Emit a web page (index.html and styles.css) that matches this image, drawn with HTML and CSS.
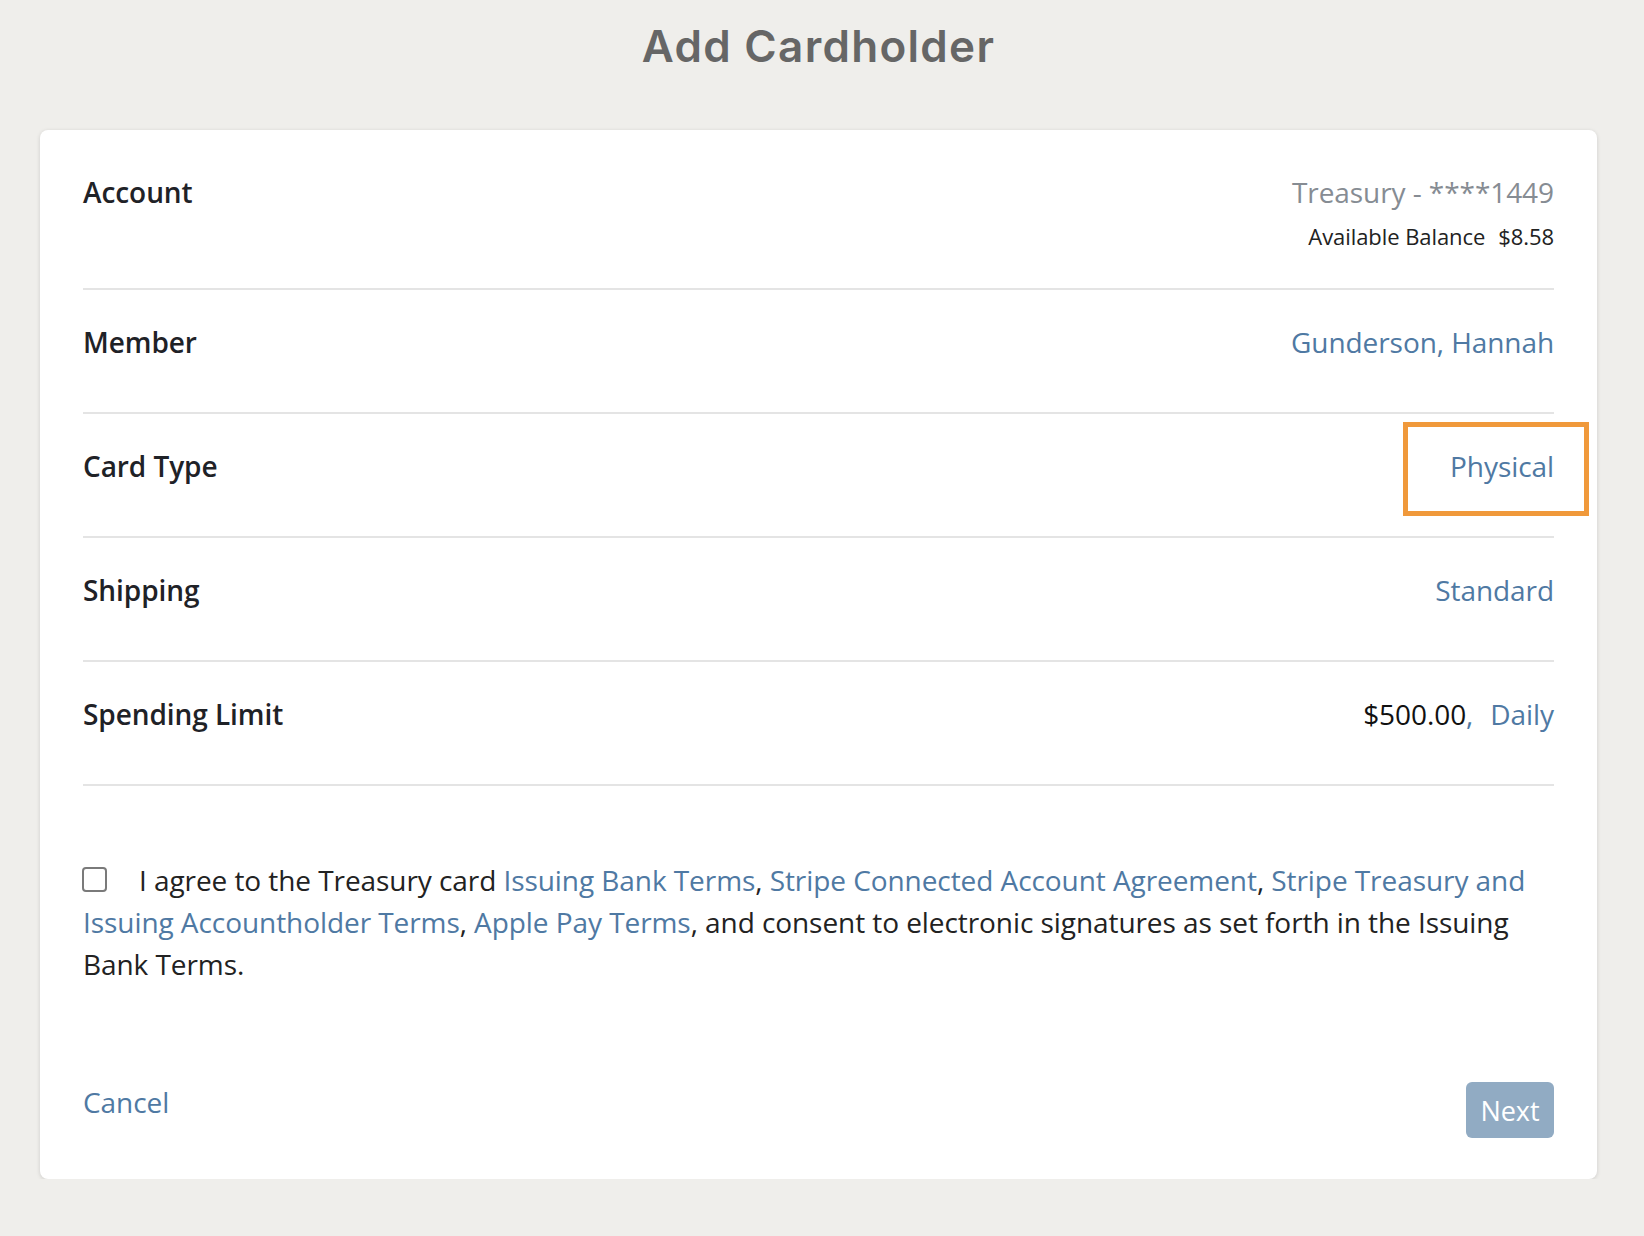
FILE: index.html
```html
<!DOCTYPE html>
<html lang="en">
<head>
<meta charset="utf-8">
<title>Add Cardholder</title>
<link rel="stylesheet" href="styles.css">
</head>
<body>
<div class="page">
  <h1 class="title">Add Cardholder</h1>
  <div class="card">
    <div class="row row-account">
      <div class="label">Account</div>
      <div class="value-stack">
        <div class="account-name">Treasury - ****1449</div>
        <div class="balance"><span>Available Balance</span><span class="balance-amt">$8.58</span></div>
      </div>
    </div>
    <div class="row">
      <div class="label">Member</div>
      <a class="link" href="#">Gunderson, Hannah</a>
    </div>
    <div class="row row-highlight">
      <div class="label">Card Type</div>
      <a class="link" href="#">Physical</a>
      <div class="highlight-box"></div>
    </div>
    <div class="row">
      <div class="label">Shipping</div>
      <a class="link" href="#">Standard</a>
    </div>
    <div class="row">
      <div class="label">Spending Limit</div>
      <div class="value"><span class="amount">$500.00</span><a class="link" href="#">,<span class="gap"></span>Daily</a></div>
    </div>
    <p class="agree"><input class="check" type="checkbox" aria-label="I agree">I agree to the Treasury card <a class="link" href="#">Issuing Bank Terms</a>, <a class="link" href="#">Stripe Connected Account Agreement</a>, <a class="link" href="#">Stripe Treasury and Issuing Accountholder Terms</a>, <a class="link" href="#">Apple Pay Terms</a>, and consent to electronic signatures as set forth in the Issuing Bank Terms.</p>
    <div class="footer">
      <a class="link cancel" href="#">Cancel</a>
      <button class="next" type="button">Next</button>
    </div>
  </div>
</div>
</body>
</html>
```

FILE: styles.css
```css
html, body {
  margin: 0;
  padding: 0;
  background: #efeeeb;
}
body {
  font-family: "Open Sans", "Liberation Sans", sans-serif;
  color: #1f2227;
}
.page {
  margin-left: 40px;
  width: 1557px;
  padding-top: 17px;
}
.title {
  margin: 0;
  text-align: center;
  font-family: "Inter", "Open Sans", sans-serif;
  font-weight: 600;
  font-size: 44px;
  line-height: 58px;
  letter-spacing: 1.3px;
  color: #666666;
}
.card {
  margin-top: 55px;
  background: #ffffff;
  border-radius: 8px;
  box-shadow: 0 1px 4px rgba(0, 0, 0, 0.14);
  padding: 11px 43px 41px 43px;
  letter-spacing: -0.07px;
}
.row {
  display: flex;
  justify-content: space-between;
  align-items: flex-start;
  padding: 34px 0 52px 0;
  border-bottom: 2px solid #e4e4e4;
  font-size: 28px;
  line-height: 36px;
}
.row-account {
  padding-top: 33px;
  padding-bottom: 36px;
}
.row-highlight {
  position: relative;
  padding-top: 34px;
  padding-bottom: 52px;
}
.label {
  font-weight: 600;
  color: #1f2227;
}
.link {
  color: #4f79a3;
  text-decoration: none;
}
.value-stack {
  text-align: right;
}
.account-name {
  color: #868c93;
  font-size: 28px;
  line-height: 36px;
}
.balance {
  margin-top: 10px;
  font-size: 22px;
  line-height: 32px;
  color: #222;
}
.balance-amt {
  margin-left: 13px;
}
.amount {
  color: #111;
}
.gap {
  display: inline-block;
  width: 17px;
}
.highlight-box {
  position: absolute;
  top: 8px;
  right: -35px;
  width: 186px;
  height: 94px;
  box-sizing: border-box;
  border: 5px solid #f0993b;
}
.agree {
  margin: 73px 0 0 0;
  font-size: 28px;
  line-height: 42px;
  color: #222;
}
.check {
  -webkit-appearance: none;
  appearance: none;
  width: 25px;
  height: 25px;
  margin: 0 32px 0 -1px;
  border: 2px solid #7a7a7a;
  border-radius: 4px;
  background: #fff;
  box-sizing: border-box;
  vertical-align: -1px;
}
.footer {
  margin-top: 98px;
  display: flex;
  justify-content: space-between;
  align-items: flex-start;
}
.cancel {
  font-size: 28px;
  line-height: 36px;
  margin-top: 1px;
}
.next {
  width: 88px;
  height: 56px;
  margin-top: -1px;
  border: none;
  border-radius: 6px;
  background: #91abc3;
  color: #ffffff;
  font-family: "Open Sans", "Liberation Sans", sans-serif;
  font-size: 27px;
  padding: 0;
}
```
